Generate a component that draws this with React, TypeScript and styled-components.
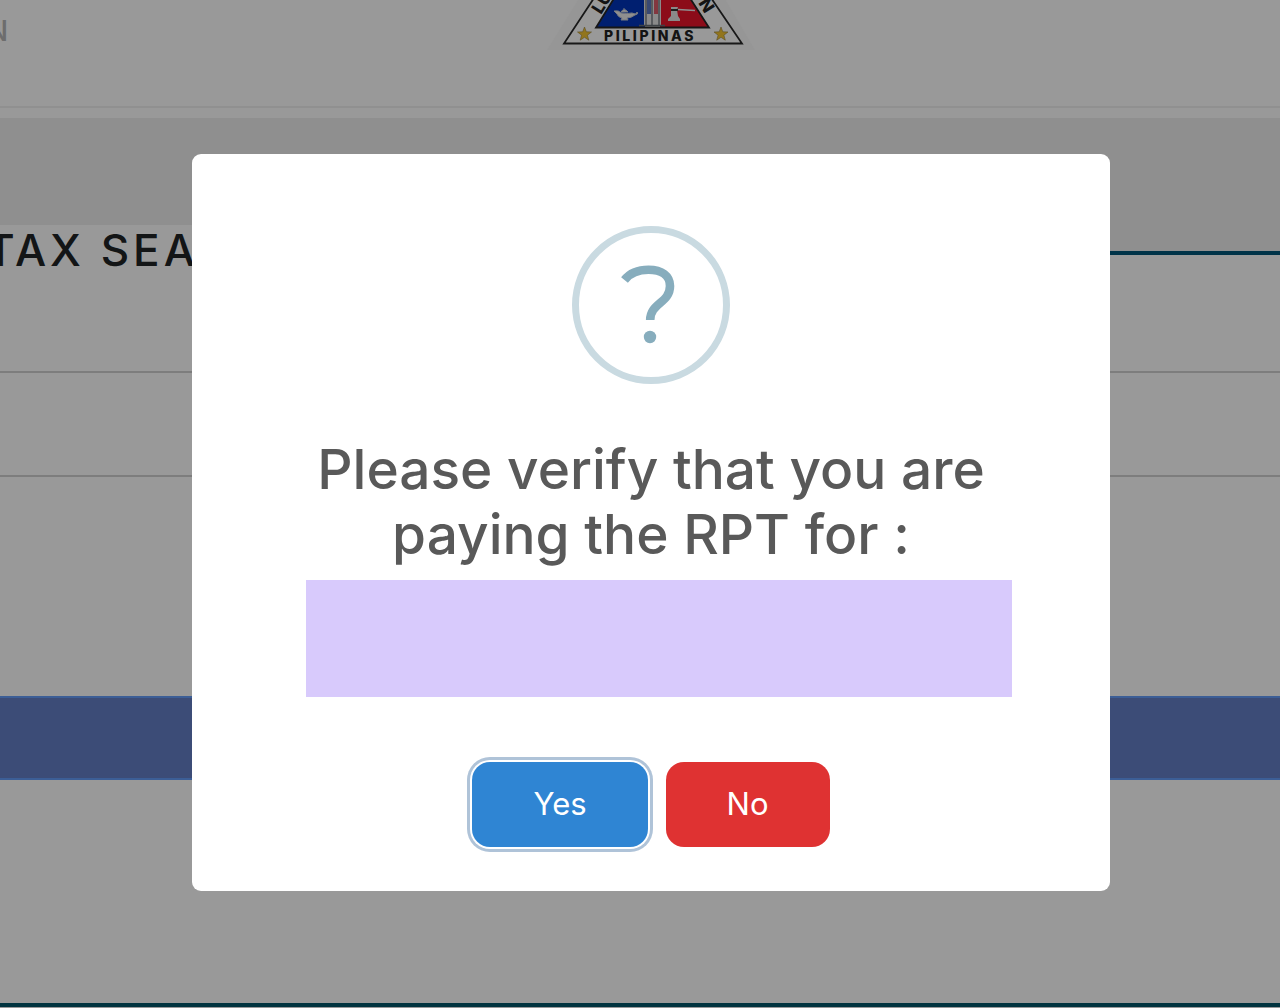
import React from "react";
import styled, { createGlobalStyle } from "styled-components";

const GlobalStyle = createGlobalStyle`
  * { box-sizing: border-box; }
  html, body, #root { height: 100%; }
  body {
    margin: 0;
    overflow: hidden;
    background: #fff;
    font-family: Inter, "Open Sans", sans-serif;
  }
`;

const Screen = styled.div`
  display: grid;
  min-height: 100%;
  overflow: hidden;
`;

const Page = styled.div`
  grid-area: 1 / 1;
  display: flex;
  flex-direction: column;
  min-width: 0;
  overflow: hidden;
`;

const Header = styled.header`
  display: grid;
  grid-template-columns: 1fr auto 1fr;
  height: 108px;
  padding-left: 22px;
  border-bottom: 2px solid #f0f0f0;
`;

const NavLink = styled.a`
  justify-self: start;
  margin: 14px 0 0 -35px;
  font-size: 28px;
  font-weight: 500;
  line-height: 34px;
  color: #b6b6b6;
  text-decoration: none;
`;

const Seal = styled.svg`
  display: block;
  width: 220px;
  height: 60px;
`;

const Band = styled.section`
  display: flex;
  align-items: flex-end;
  height: 137px;
  margin-top: 10px;
  background: #efefef;
  border-bottom: 4px solid #005578;
`;

const PageTitle = styled.h1`
  width: 50%;
  height: 30px;
  margin: 0 0 -4px -14px;
  background: #fff;
  font-size: 44px;
  font-weight: 500;
  line-height: 50px;
  letter-spacing: 4px;
  white-space: nowrap;
  color: #202326;
`;

const Field = styled.div<{ $height: number }>`
  height: ${(p) => p.$height}px;
  border-bottom: 2px solid #d0d0d0;
`;

const Bar = styled.div`
  height: 84px;
  margin-top: 219px;
  background: #657fc6;
  border: solid #649dfa;
  border-width: 2px 0;
`;

const Footer = styled.footer`
  margin-top: 223px;
  border-top: 4px solid #005569;
`;

const Overlay = styled.div`
  grid-area: 1 / 1;
  z-index: 1;
  display: flex;
  align-items: flex-start;
  padding: 154px 170px 0 192px;
  background: rgba(0, 0, 0, 0.4);
`;

const Dialog = styled.div`
  flex: 1;
  display: flex;
  flex-direction: column;
  align-items: center;
  min-width: 0;
  padding: 72px 98px 44px;
  border-radius: 9px;
  background: #fff;
`;

const QuestionIcon = styled.svg`
  display: block;
  width: 158px;
  height: 158px;
`;

const Question = styled.h2`
  margin: 53px 0 0;
  font-size: 55px;
  font-weight: 500;
  line-height: 65px;
  text-align: center;
  color: #595959;
`;

const Owner = styled.div`
  align-self: stretch;
  height: 117px;
  margin: 13px 0 0 16px;
  background: #d8cafc;
`;

const Actions = styled.div`
  display: flex;
  gap: 18px;
  margin-top: 65px;
`;

const Button = styled.button<{ $color: string; $focused?: boolean }>`
  height: 85px;
  padding: 0 61px 3px;
  border: 0;
  border-radius: 18px;
  background: ${(p) => p.$color};
  box-shadow: ${(p) => (p.$focused ? "0 0 0 2px #fff, 0 0 0 5px #afc3d8" : "none")};
  font-family: inherit;
  font-size: 31px;
  color: #fff;
`;

const Star = ({ x }: { x: number }) => (
  <path
    transform={`translate(${x} 34)`}
    d="M0-7 1.8-2.2 7-2 2.9 1.2 4.3 6.2 0 3.3-4.3 6.2-2.9 1.2-7-2-1.8-2.2Z"
    fill="#f3c431"
    stroke="#97823c"
    strokeWidth=".6"
  />
);

const SealArt = () => (
  <Seal viewBox="0 0 220 60" role="img" aria-label="Pilipinas seal">
    <path d="M42-8 6 50H214L180-8Z" fill="#fbfbfb" />
    <path d="M57-8 23 43.5H201L166-8Z" fill="#fff" stroke="#292929" strokeWidth="1.8" />
    <path d="M77-8 55 27.5H104V-8Z" fill="#0035bb" />
    <path d="M119-8V27.5H168L145-8Z" fill="#e9142b" />
    <path d="M77-8 55 27.5H168L145-8" fill="none" stroke="#252525" strokeWidth="1.8" />
    <path d="M103-2H120V25H103Z" fill="#e7e7e7" />
    <path d="M107-2V14M109-2V14" stroke="#254cae" strokeWidth="1.4" />
    <path d="M114-2V14M116-2V14" stroke="#d62235" strokeWidth="1.4" />
    <path d="M105 0V25M111 0V25M118 0V25M98 25.5H124" stroke="#686e76" strokeWidth="1.3" />
    <path d="M73 11Q78 10 80 13Q86 14 91 13Q96 15 96 12Q98 14 94 15Q90 18 86 18L87 20H80L81 18Q77 17 76 14ZM80 12Q83 7 87 12ZM83 8V9" fill="#eee" stroke="#c5cbd7" strokeWidth="1" />
    <path d="M130 7H137L136 10 137 16 139 19V21H127V19L130 16Z" fill="#e7e7e7" />
    <path d="M130 10H137" stroke="#333" strokeWidth="2" />
    <path d="M137 9.5 154 10.5" stroke="#eee" strokeWidth="1.6" />
    <g fill="#222" fontFamily="Inter, sans-serif" fontWeight="800">
      <text x="63" y="41" fontSize="14" letterSpacing="2.6">PILIPINAS</text>
      <text transform="translate(60 15) rotate(-58)" fontSize="17">LU</text>
      <text transform="translate(157 3) rotate(58)" fontSize="17">N</text>
    </g>
    <Star x={43.5} />
    <Star x={180} />
  </Seal>
);

export default function App() {
  return (
    <>
      <GlobalStyle />
      <Screen>
        <Page>
          <Header>
            <NavLink href="#">N</NavLink>
            <SealArt />
          </Header>
          <Band>
            <PageTitle>TAX SEA</PageTitle>
          </Band>
          <Field $height={118} />
          <Field $height={104} />
          <Bar />
          <Footer />
        </Page>
        <Overlay>
          <Dialog role="dialog" aria-modal="true" aria-labelledby="question">
            <QuestionIcon viewBox="0 0 158 158" fill="none" aria-hidden="true">
              <circle cx="79" cy="79" r="75.5" stroke="#c9dae1" strokeWidth="7" />
              <path
                d="M52.5 54C58 47 66 43.8 76.5 43.8C90 43.8 98 50 98 60C98 77 78.2 77 78.2 94"
                stroke="#87adbd"
                strokeWidth="8.6"
              />
              <circle cx="78" cy="111" r="6.2" fill="#87adbd" />
            </QuestionIcon>
            <Question id="question">Please verify that you are paying the RPT for :</Question>
            <Owner />
            <Actions>
              <Button type="button" $color="#2f85d3" $focused>Yes</Button>
              <Button type="button" $color="#df3232">No</Button>
            </Actions>
          </Dialog>
        </Overlay>
      </Screen>
    </>
  );
}
